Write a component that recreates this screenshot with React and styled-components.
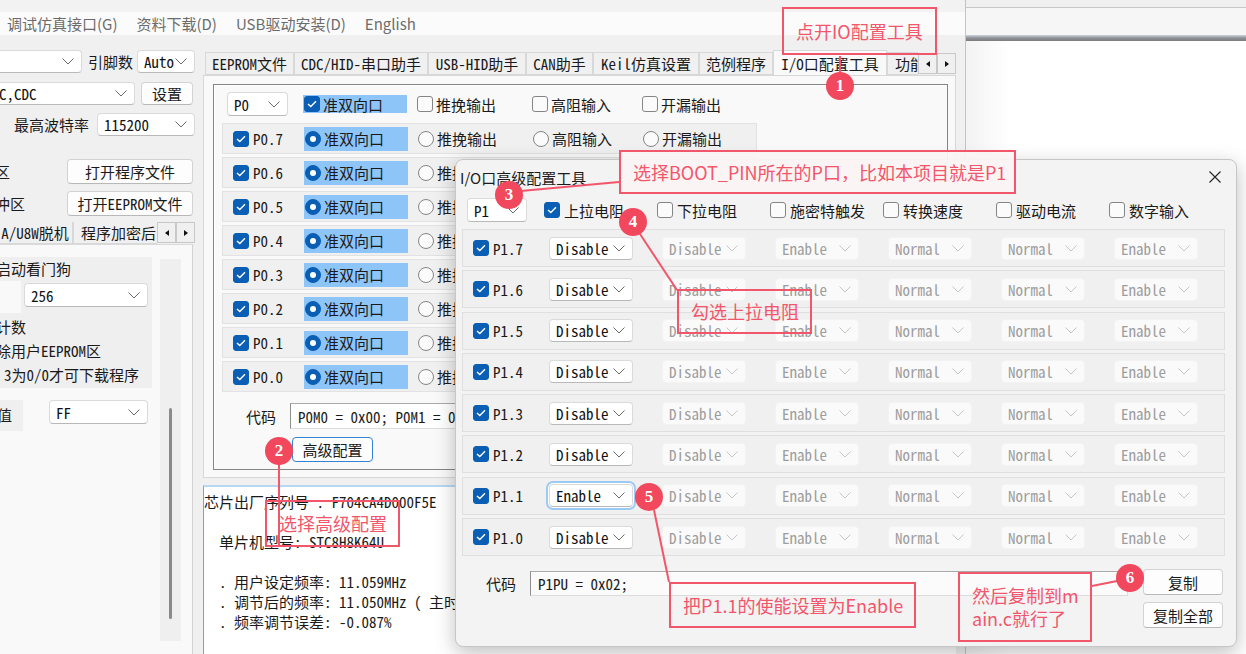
import React from "react";
import styled, { createGlobalStyle, css } from "styled-components";

const SANS = `"Noto Sans CJK SC", "Noto Sans", sans-serif`;
const MONO = `"Noto Sans Mono CJK SC", "Noto Sans CJK SC", "Liberation Mono", monospace`;
const RED = "#f2566b";
const BLUE = "#0a5fb4";

const GlobalStyle = createGlobalStyle`
    html, body {
        margin: 0;
        padding: 0;
        background: #f0f0f0;
    }
    body {
        font-family: ${SANS};
        color: #1a1a1a;
    }
    * {
        box-sizing: border-box;
    }
`;

const Screen = styled.div`
    position: relative;
    width: 1246px;
    height: 654px;
    overflow: hidden;
    display: flex;
`;

/* ---------- main STC window ---------- */

const MainWindow = styled.div`
    width: 966px;
    flex-shrink: 0;
    display: flex;
    flex-direction: column;
    background: #f0f0f0;
    border-right: 1px solid #c4c4c4;
`;

const TopStrip = styled.div`
    height: 12px;
    background: #f2f2f2;
`;

const MenuBar = styled.div`
    height: 23px;
    display: flex;
    align-items: center;
    gap: 19px;
    padding-left: 7px;
    background: #fbfbfb;
    font: 15px/23px ${SANS};
    color: #6c6c6c;
    white-space: nowrap;
`;

const Body = styled.div`
    flex: 1;
    display: flex;
    min-height: 0;
`;

const LeftPanel = styled.div`
    width: 203px;
    flex-shrink: 0;
    display: flex;
    flex-direction: column;
    overflow: hidden;
`;

const Row = styled.div`
    display: flex;
    align-items: ${(p) => p.$align || "center"};
    flex-shrink: 0;
    height: ${(p) => p.$h || 23}px;
    margin-top: ${(p) => p.$mt || 0}px;
    padding-left: ${(p) => p.$pl || 0}px;
    padding-right: ${(p) => p.$pr || 0}px;
    justify-content: ${(p) => (p.$between ? "space-between" : "flex-start")};
`;

const Label = styled.span`
    flex-shrink: 0;
    font: 15px ${(p) => (p.$sans ? SANS : MONO)};
    white-space: nowrap;
    margin-left: ${(p) => p.$ml || 0}px;
`;

const SelectBox = styled.div`
    display: flex;
    align-items: center;
    justify-content: space-between;
    flex-shrink: 0;
    width: ${(p) => p.$w}px;
    height: ${(p) => p.$h || 23}px;
    margin-left: ${(p) => p.$ml || 0}px;
    padding: 0 7px 0 6px;
    background: ${(p) => (p.$disabled ? "#fafafa" : "#fff")};
    border: 1px solid ${(p) => (p.$disabled ? "#f3f3f3" : "#dadada")};
    border-bottom-color: ${(p) => (p.$disabled ? "#f3f3f3" : "#b9b9b9")};
    border-radius: 4px;
    font: 15px ${MONO};
    color: ${(p) => (p.$disabled ? "#9d9d9d" : "#111")};
    white-space: nowrap;
    ${(p) =>
        p.$focus &&
        css`
            box-shadow: 0 0 0 1px #fff, 0 0 0 3px #9ccaf4;
        `}
`;

const ChevronSvg = styled.svg`
    flex-shrink: 0;
`;

const Select = ({ value, w, h, ml, disabled, focus }) => (
    <SelectBox $w={w} $h={h} $ml={ml} $disabled={disabled} $focus={focus}>
        <span>{value}</span>
        <ChevronSvg width="12" height="7" viewBox="0 0 12 7">
            <path
                d="M0.5 0.5 L6 6 L11.5 0.5"
                fill="none"
                stroke={disabled ? "#c6c6c6" : "#6a6a6a"}
                strokeWidth="1"
            />
        </ChevronSvg>
    </SelectBox>
);

const Button = styled.button`
    flex-shrink: 0;
    width: ${(p) => p.$w}px;
    height: ${(p) => p.$h || 25}px;
    margin-left: ${(p) => p.$ml || 0}px;
    padding: 0;
    background: #fdfdfd;
    border: 1px solid ${(p) => (p.$focus ? "#3483d4" : "#d3d3d3")};
    border-bottom-color: ${(p) => (p.$focus ? "#3483d4" : "#b8b8b8")};
    border-radius: 4px;
    font: 15px ${(p) => (p.$sans ? SANS : MONO)};
    color: #1a1a1a;
`;

const TabStrip = styled.div`
    display: flex;
    align-items: flex-end;
    flex-shrink: 0;
    height: ${(p) => p.$h || 25}px;
    margin-top: ${(p) => p.$mt || 0}px;
    margin-right: ${(p) => p.$mr || 0}px;
    padding-left: ${(p) => p.$pl || 0}px;
`;

const TabList = styled.div`
    flex: 1;
    height: 100%;
    display: flex;
    align-items: flex-end;
    overflow: hidden;
`;

const Tab = styled.div`
    flex-shrink: 0;
    width: ${(p) => p.$w}px;
    height: ${(p) => (p.$active ? 25 : 23)}px;
    margin-left: ${(p) => p.$ml || 0}px;
    display: flex;
    align-items: center;
    justify-content: ${(p) => (p.$clip ? "flex-start" : "center")};
    padding-left: ${(p) => (p.$clip ? 7 : 0)}px;
    background: ${(p) => (p.$active ? "#f9f9f9" : "#f0f0f0")};
    border: 1px solid #d8d8d8;
    border-bottom: ${(p) => (p.$active ? "none" : "1px solid #d8d8d8")};
    font: 15px ${MONO};
    white-space: nowrap;
    overflow: hidden;
`;

const ScrollArrow = styled.div`
    flex-shrink: 0;
    width: 19px;
    height: 21px;
    margin-bottom: 1px;
    display: flex;
    align-items: center;
    justify-content: center;
    background: #f0f0f0;
    border: 1px solid #c8c8c8;

    &::after {
        content: "";
        border-style: solid;
        border-width: ${(p) => (p.$right ? "3.5px 0 3.5px 4px" : "3.5px 4px 3.5px 0")};
        border-color: ${(p) =>
            p.$right
                ? "transparent transparent transparent #111"
                : "transparent #111 transparent transparent"};
    }
`;

const LeftTabBody = styled.div`
    flex: 1;
    display: flex;
    gap: 8px;
    margin-right: 10px;
    padding-top: 12px;
    background: #f9f9f9;
    border-top: 1px solid #dadada;
    border-right: 1px solid #d2d2d2;
`;

const OptionColumn = styled.div`
    width: 152px;
    flex-shrink: 0;
    display: flex;
    flex-direction: column;
`;

const GrayBlock = styled.div`
    background: #efefef;
    flex-shrink: 0;
    width: ${(p) => p.$w || 152}px;
    height: ${(p) => p.$h}px;
    margin-left: ${(p) => p.$ml || 0}px;
    padding-top: ${(p) => p.$pt || 0}px;
    padding-left: ${(p) => p.$pl || 0}px;
`;

const GrayLine = styled.div`
    height: 24px;
    font: 15px/24px ${MONO};
    white-space: nowrap;
    text-indent: ${(p) => p.$indent || 0}px;
`;

const ScrollTrack = styled.div`
    width: 21px;
    height: 382px;
    margin-top: 2px;
    padding-top: 149px;
    display: flex;
    justify-content: center;
    background: #efefef;
`;

const ScrollThumb = styled.div`
    width: 3px;
    height: 211px;
    border-radius: 2px;
    background: #8a8a8a;
`;

const MiddlePanel = styled.div`
    flex: 1;
    min-width: 0;
    display: flex;
    flex-direction: column;
`;

const TabContent = styled.div`
    flex-shrink: 0;
    height: 403px;
    margin-right: 9px;
    padding: 8px 7px 0 9px;
    background: #f9f9f9;
    border: 1px solid #d8d8d8;
`;

const GroupBox = styled.div`
    height: 386px;
    display: flex;
    flex-direction: column;
    padding-top: 7px;
    border: 1px solid #858585;
    box-shadow: inset 1px 1px 0 #fff;
`;

const PortList = styled.div`
    display: flex;
    flex-direction: column;
    gap: 3px;
    margin: 7px 0 0 8px;
`;

const PortRow = styled.div`
    width: 535px;
    height: 31px;
    display: flex;
    align-items: center;
    padding-left: 10px;
    background: #f0f0f0;
    border: 1px solid #e2e2e2;
`;

const PinCell = styled.div`
    flex-shrink: 0;
    width: ${(p) => p.$w || "auto"}px;
    display: flex;
    align-items: center;
    gap: 4px;
    font: 15px ${MONO};
    white-space: nowrap;
`;

const OptionCell = styled.div`
    flex-shrink: 0;
    display: flex;
    align-items: center;
    gap: 3px;
    width: ${(p) => p.$w}px;
    height: ${(p) => p.$h || 24}px;
    margin-right: ${(p) => p.$mr || 0}px;
    padding-left: 1px;
    background: ${(p) => (p.$active ? "#8ec5f9" : "transparent")};
    font: 15px ${SANS};
    white-space: nowrap;
`;

const CodeField = styled.div`
    flex-shrink: 0;
    width: ${(p) => p.$w}px;
    height: ${(p) => p.$h || 26}px;
    margin-left: 14px;
    display: flex;
    align-items: center;
    padding-left: 7px;
    background: ${(p) => p.$bg || "#fff"};
    border: 1px solid #dcdcdc;
    border-left-color: #8f8f8f;
    border-top-color: #a9a9a9;
    font: 15px ${MONO};
    white-space: pre;
    overflow: hidden;
`;

const LogArea = styled.div`
    flex: 1;
    margin: 7px 9px 0 0;
    padding-top: 5px;
    background: #fff;
    border-top: 2px solid #b6d8f3;
    border-left: 1px solid #9c9c9c;
    font: 15px/20px ${MONO};
    white-space: pre;
    overflow: hidden;
`;

/* ---------- window on the right ---------- */

const SideWindow = styled.div`
    flex: 1;
    display: flex;
    flex-direction: column;
    background: #fff;
`;

const SideTop = styled.div`
    height: 8px;
    background: #f0f0f0;
    border-bottom: 1px solid #c8c8c8;
`;

const SideBar = styled.div`
    height: 27px;
    background: #f6f6f6;
`;

const SideRule = styled.div`
    height: 6px;
    background: linear-gradient(#d0d5de, #8d9096 50%, #7c7c7c);
`;

const SideBody = styled.div`
    flex: 1;
    background: linear-gradient(90deg, #f3f3f3, #fff 45px);
`;

/* ---------- advanced I/O dialog ---------- */

const Dialog = styled.div`
    position: absolute;
    left: 455px;
    top: 159px;
    width: 782px;
    height: 488px;
    display: flex;
    flex-direction: column;
    background: #f3f3f3;
    border: 1px solid #c6c6c6;
    border-radius: 8px;
    box-shadow: 0 6px 20px rgba(0, 0, 0, 0.25);
    overflow: hidden;
`;

const TitleBar = styled.div`
    height: 34px;
    flex-shrink: 0;
    display: flex;
    align-items: center;
    justify-content: space-between;
    padding: 0 15px 0 4px;
    font: 15px ${SANS};
    color: #1b1b1b;
`;

const DialogHeader = styled.div`
    display: grid;
    grid-template-columns: 77px repeat(6, 113px);
    align-items: center;
    height: 24px;
    margin-top: 4px;
    padding-left: 11px;
`;

const CheckItem = styled.div`
    display: flex;
    align-items: center;
    gap: 4px;
    font: 15px ${SANS};
    white-space: nowrap;
`;

const PinList = styled.div`
    width: 763px;
    display: flex;
    flex-direction: column;
    gap: 3.3px;
    margin: 7px 0 0 6px;
`;

const PinRow = styled.div`
    height: 38px;
    display: grid;
    grid-template-columns: 47px repeat(6, 84px);
    column-gap: 29px;
    align-items: center;
    padding-left: 10px;
    background: #f0f0f0;
    border: 1px solid #dfdfdf;
`;

const BottomArea = styled.div`
    display: flex;
    align-items: flex-start;
    margin-top: 13px;
    padding-left: 30px;
`;

const CodeLine = styled.div`
    display: flex;
    align-items: center;
    height: 26px;
    margin-top: 1px;
`;

const ButtonColumn = styled.div`
    display: flex;
    flex-direction: column;
    gap: 7px;
    margin-left: 15px;
`;

/* ---------- check marks ---------- */

const Box = styled.span`
    width: 16px;
    height: 16px;
    flex-shrink: 0;
    display: inline-flex;
    align-items: center;
    justify-content: center;
    border-radius: 3px;
    background: ${(p) => (p.$on ? BLUE : "#fbfbfb")};
    border: 1px solid ${(p) => (p.$on ? BLUE : "#858585")};
`;

const Check = ({ on }) => (
    <Box $on={on}>
        {on && (
            <svg width="10" height="8" viewBox="0 0 10 8">
                <path d="M1 4 L3.8 6.6 L9 1.2" fill="none" stroke="#fff" strokeWidth="1.4" />
            </svg>
        )}
    </Box>
);

const Radio = styled.span`
    width: 16px;
    height: 16px;
    flex-shrink: 0;
    display: inline-flex;
    align-items: center;
    justify-content: center;
    border-radius: 50%;
    background: ${(p) => (p.$on ? BLUE : "#fbfbfb")};
    border: 1px solid ${(p) => (p.$on ? BLUE : "#858585")};

    &::after {
        content: "";
        width: ${(p) => (p.$on ? 6 : 0)}px;
        height: ${(p) => (p.$on ? 6 : 0)}px;
        border-radius: 50%;
        background: #fff;
    }
`;

/* ---------- annotations ---------- */

const Overlay = styled.svg`
    position: absolute;
    left: 0;
    top: 0;
    pointer-events: none;
`;

const Callout = styled.div`
    position: absolute;
    left: ${(p) => p.$x}px;
    top: ${(p) => p.$y}px;
    width: ${(p) => p.$w}px;
    height: ${(p) => p.$h}px;
    display: flex;
    align-items: center;
    padding-left: 12px;
    background: ${(p) => p.$fill || "transparent"};
    border: 2px solid ${RED};
    font: 18px/23px ${SANS};
    color: ${RED};
    white-space: nowrap;
`;

const Badge = styled.div`
    position: absolute;
    left: ${(p) => p.$cx - 14}px;
    top: ${(p) => p.$cy - 14}px;
    width: 28px;
    height: 28px;
    display: flex;
    align-items: center;
    justify-content: center;
    border-radius: 50%;
    background: #f1485e;
    color: #fff;
    font: bold 17px "Liberation Serif", serif;
`;

const MENU = ["调试仿真接口(G)", "资料下载(D)", "USB驱动安装(D)", "English"];

const TABS = [
    { label: "EEPROM文件", w: 89 },
    { label: "CDC/HID-串口助手", w: 134 },
    { label: "USB-HID助手", w: 98 },
    { label: "CAN助手", w: 67 },
    { label: "Keil仿真设置", w: 106 },
    { label: "范例程序", w: 74 },
    { label: "I/O口配置工具", w: 114, active: true },
    { label: "功能", w: 60, clip: true },
];

const MODES = [
    { label: "准双向口", w: 104, mr: 9 },
    { label: "推挽输出", w: 115 },
    { label: "高阻输入", w: 110 },
    { label: "开漏输出", w: 90 },
];

const P0_PINS = ["P0.7", "P0.6", "P0.5", "P0.4", "P0.3", "P0.2", "P0.1", "P0.0"];
const P1_PINS = ["P1.7", "P1.6", "P1.5", "P1.4", "P1.3", "P1.2", "P1.1", "P1.0"];
const FEATURES = ["上拉电阻", "下拉电阻", "施密特触发", "转换速度", "驱动电流", "数字输入"];
const LOCKED = ["Disable", "Enable", "Normal", "Normal", "Enable"];

const LOG = [
    "芯片出厂序列号 : F704CA4D000F5E",
    "",
    "  单片机型号: STC8H8K64U",
    "",
    "  . 用户设定频率: 11.059MHz",
    "  . 调节后的频率: 11.050MHz ( 主时钟",
    "  . 频率调节误差: -0.087%",
];

const ModeCells = ({ header }) =>
    MODES.map((m, i) => (
        <OptionCell key={m.label} $w={m.w} $mr={m.mr} $h={header && i === 0 ? 18 : 24} $active={i === 0}>
            {header ? <Check on={i === 0} /> : <Radio $on={i === 0} />}
            {m.label}
        </OptionCell>
    ));

const LeftSide = () => (
    <LeftPanel>
        <Row $mt={15}>
            <Select w={90} ml={-8} value="" />
            <Label $ml={6}>引脚数</Label>
            <Select w={58} ml={4} value="Auto" />
        </Row>
        <Row $mt={9}>
            <Select w={143} ml={-8} value="C,CDC" />
            <Button $w={52} $h={23} $ml={6}>
                设置
            </Button>
        </Row>
        <Row $mt={8} $pl={14}>
            <Label>最高波特率</Label>
            <Select w={98} ml={8} value="115200" />
        </Row>
        <Row $mt={23} $h={25} $pr={10} $between>
            <Label $ml={-5}>区</Label>
            <Button $w={126}>打开程序文件</Button>
        </Row>
        <Row $mt={7} $h={25} $pr={10} $between>
            <Label $ml={-5}>冲区</Label>
            <Button $w={126}>打开EEPROM文件</Button>
        </Row>
        <TabStrip $mt={6} $h={22} $mr={8}>
            <TabList>
                <Tab $w={76} $ml={-3}>
                    A/U8W脱机
                </Tab>
                <Tab $w={92} $clip>
                    程序加密后
                </Tab>
            </TabList>
            <ScrollArrow />
            <ScrollArrow $right />
        </TabStrip>
        <LeftTabBody>
            <OptionColumn>
                <GrayBlock $h={24}>
                    <GrayLine $indent={-4}>启动看门狗</GrayLine>
                </GrayBlock>
                <GrayBlock $h={32} $w={131} $ml={21} $pl={3} $pt={2}>
                    <Select w={124} h={24} value="256" />
                </GrayBlock>
                <GrayBlock $h={75} $pt={2}>
                    <GrayLine $indent={-4}>计数</GrayLine>
                    <GrayLine $indent={-4}>除用户EEPROM区</GrayLine>
                    <GrayLine $indent={4}>3为0/0才可下载程序</GrayLine>
                </GrayBlock>
                <Row $mt={12} $h={31} $align="flex-start">
                    <GrayBlock $h={31} $w={23} $pt={3}>
                        <GrayLine $indent={-3}>值</GrayLine>
                    </GrayBlock>
                    <Select w={99} h={24} ml={26} value="FF" />
                </Row>
            </OptionColumn>
            <ScrollTrack>
                <ScrollThumb />
            </ScrollTrack>
        </LeftTabBody>
    </LeftPanel>
);

const IoTool = () => (
    <MiddlePanel>
        <TabStrip $mt={15} $pl={2} $mr={9}>
            <TabList>
                {TABS.map((t) => (
                    <Tab key={t.label} $w={t.w} $active={t.active} $clip={t.clip}>
                        {t.label}
                    </Tab>
                ))}
            </TabList>
            <ScrollArrow />
            <ScrollArrow $right />
        </TabStrip>
        <TabContent>
            <GroupBox>
                <Row $h={24} $pl={13}>
                    <Select w={61} h={24} value="P0" />
                    <PinCell $w={15} />
                    <ModeCells header />
                </Row>
                <PortList>
                    {P0_PINS.map((pin) => (
                        <PortRow key={pin}>
                            <PinCell $w={71}>
                                <Check on />
                                {pin}
                            </PinCell>
                            <ModeCells />
                        </PortRow>
                    ))}
                </PortList>
                <Row $mt={11} $h={26} $pl={32}>
                    <Label $sans>代码</Label>
                    <CodeField $w={640}>P0M0 = 0x00; P0M1 = 0x00;</CodeField>
                </Row>
                <Row $mt={8} $h={25} $pl={78}>
                    <Button $w={81} $focus $sans>
                        高级配置
                    </Button>
                </Row>
            </GroupBox>
        </TabContent>
        <LogArea>{LOG.join("\n")}</LogArea>
    </MiddlePanel>
);

const AdvancedDialog = () => (
    <Dialog>
        <TitleBar>
            <span>I/O口高级配置工具</span>
            <svg width="12" height="12" viewBox="0 0 12 12">
                <path d="M0.5 0.5 L11.5 11.5 M11.5 0.5 L0.5 11.5" stroke="#222" strokeWidth="1.1" />
            </svg>
        </TitleBar>
        <DialogHeader>
            <Select w={60} h={24} value="P1" />
            {FEATURES.map((f, i) => (
                <CheckItem key={f}>
                    <Check on={i === 0} />
                    {f}
                </CheckItem>
            ))}
        </DialogHeader>
        <PinList>
            {P1_PINS.map((pin) => {
                const picked = pin === "P1.1";
                return (
                    <PinRow key={pin}>
                        <PinCell>
                            <Check on />
                            {pin}
                        </PinCell>
                        <Select w={84} value={picked ? "Enable" : "Disable"} focus={picked} />
                        {LOCKED.map((v, i) => (
                            <Select key={i} w={84} value={v} disabled />
                        ))}
                    </PinRow>
                );
            })}
        </PinList>
        <BottomArea>
            <CodeLine>
                <Label $sans>代码</Label>
                <CodeField $w={598} $h={25} $bg="#fbfbfb">
                    P1PU = 0x02;
                </CodeField>
            </CodeLine>
            <ButtonColumn>
                <Button $w={80} $h={26} $sans>
                    复制
                </Button>
                <Button $w={80} $h={26} $sans>
                    复制全部
                </Button>
            </ButtonColumn>
        </BottomArea>
    </Dialog>
);

const LINES = [
    [840, 56, 840, 73],
    [279, 465, 279, 546],
    [521, 191, 619, 182],
    [640, 234, 677, 290],
    [654, 510, 669, 582],
    [1092, 586, 1117, 581],
];

const BADGES = [
    [840, 86],
    [279, 451],
    [509, 195],
    [633, 222],
    [649, 497],
    [1130, 578],
];

const Annotations = () => (
    <>
        <Overlay width="1246" height="654">
            {LINES.map(([x1, y1, x2, y2], i) => (
                <line key={i} x1={x1} y1={y1} x2={x2} y2={y2} stroke={RED} strokeWidth="2" />
            ))}
        </Overlay>
        <Callout $x={782} $y={7} $w={155} $h={48}>
            点开IO配置工具
        </Callout>
        <Callout $x={265} $y={500} $w={135} $h={47}>
            选择高级配置
        </Callout>
        <Callout $x={619} $y={150} $w={397} $h={44} $fill="rgba(252, 244, 244, 0.92)">
            选择BOOT_PIN所在的P口，比如本项目就是P1
        </Callout>
        <Callout $x={677} $y={289} $w={135} $h={45}>
            勾选上拉电阻
        </Callout>
        <Callout $x={669} $y={582} $w={247} $h={46}>
            把P1.1的使能设置为Enable
        </Callout>
        <Callout $x={958} $y={572} $w={134} $h={70}>
            然后复制到m
            <br />
            ain.c就行了
        </Callout>
        {BADGES.map(([cx, cy], i) => (
            <Badge key={i} $cx={cx} $cy={cy}>
                {i + 1}
            </Badge>
        ))}
    </>
);

const App = () => {
    return (
        <Screen>
            <GlobalStyle />
            <MainWindow>
                <TopStrip />
                <MenuBar>
                    {MENU.map((m) => (
                        <span key={m}>{m}</span>
                    ))}
                </MenuBar>
                <Body>
                    <LeftSide />
                    <IoTool />
                </Body>
            </MainWindow>
            <SideWindow>
                <SideTop />
                <SideBar />
                <SideRule />
                <SideBody />
            </SideWindow>
            <AdvancedDialog />
            <Annotations />
        </Screen>
    );
};

export default App;
